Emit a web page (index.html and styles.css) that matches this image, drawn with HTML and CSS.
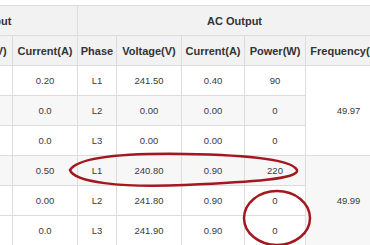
FILE: index.html
```html
<!DOCTYPE html>
<html>
<head>
<meta charset="utf-8">
<link rel="stylesheet" href="styles.css">
</head>
<body>
<div class="wrap">
<table class="grid">
  <colgroup>
    <col class="c-a"><col class="c-b"><col class="c-c">
    <col class="c-ph"><col class="c-v"><col class="c-i"><col class="c-p"><col class="c-f">
  </colgroup>
  <thead>
    <tr>
      <th colspan="3">AC Input</th>
      <th colspan="5">AC Output</th>
    </tr>
    <tr>
      <th>Phase</th><th>Voltage(V)</th><th>Current(A)</th>
      <th>Phase</th><th>Voltage(V)</th><th>Current(A)</th><th>Power(W)</th><th>Frequency(Hz)</th>
    </tr>
  </thead>
  <tbody>
    <tr><td>L1</td><td>238.60</td><td>0.20</td><td>L1</td><td>241.50</td><td>0.40</td><td>90</td><td rowspan="3">49.97</td></tr>
    <tr class="alt"><td>L2</td><td>0.00</td><td>0.0</td><td>L2</td><td>0.00</td><td>0.00</td><td>0</td></tr>
    <tr><td>L3</td><td>0.00</td><td>0.0</td><td>L3</td><td>0.00</td><td>0.00</td><td>0</td></tr>
    <tr class="alt"><td>L1</td><td>239.10</td><td>0.50</td><td>L1</td><td>240.80</td><td>0.90</td><td>220</td><td rowspan="3">49.99</td></tr>
    <tr><td>L2</td><td>240.20</td><td>0.00</td><td>L2</td><td>241.80</td><td>0.90</td><td>0</td></tr>
    <tr><td>L3</td><td>240.50</td><td>0.0</td><td>L3</td><td>241.90</td><td>0.90</td><td>0</td></tr>
  </tbody>
</table>
</div>
<svg class="marks" width="370" height="245" viewBox="0 0 370 245">
  <path d="M70,170 C78,158 120,153 185,154 C250,155 292,160 297,170 C300,179 250,182 185,185 C120,188 74,182 70,170 Z" />
  <ellipse cx="277" cy="218" rx="33" ry="27" />
</svg>
</body>
</html>
```
FILE: styles.css
```css
html, body {
  margin: 0;
  padding: 0;
  background: #fff;
  overflow: hidden;
}
.wrap {
  width: 370px;
  height: 245px;
  overflow: hidden;
  padding-top: 5px;
  box-sizing: border-box;
}
.grid {
  margin-left: -101px;
  border-collapse: collapse;
  table-layout: fixed;
  width: 492px;
  font-family: "Liberation Sans", Arial, sans-serif;
  color: #3a3a3a;
}
.c-a { width: 48px; }
.c-b { width: 65px; }
.c-c { width: 65px; }
.c-ph { width: 39px; }
.c-v { width: 65px; }
.c-i { width: 63px; }
.c-p { width: 61px; }
.c-f { width: 86px; }
.grid th, .grid td {
  border: 1px solid #dcdcdc;
  height: 29px;
  padding: 0;
  text-align: center;
  vertical-align: middle;
  white-space: nowrap;
  overflow: hidden;
}
.grid th {
  background: #f2f2f2;
  font-weight: bold;
  font-size: 11px;
  color: #333;
}
.grid td {
  font-size: 9.5px;
  background: #fff;
}
.grid tr.alt td {
  background: #f7f7f7;
}
.marks {
  position: absolute;
  left: 0;
  top: 0;
  pointer-events: none;
}
.marks path, .marks ellipse {
  fill: none;
  stroke: #a3181f;
  stroke-width: 2.5;
}
```
